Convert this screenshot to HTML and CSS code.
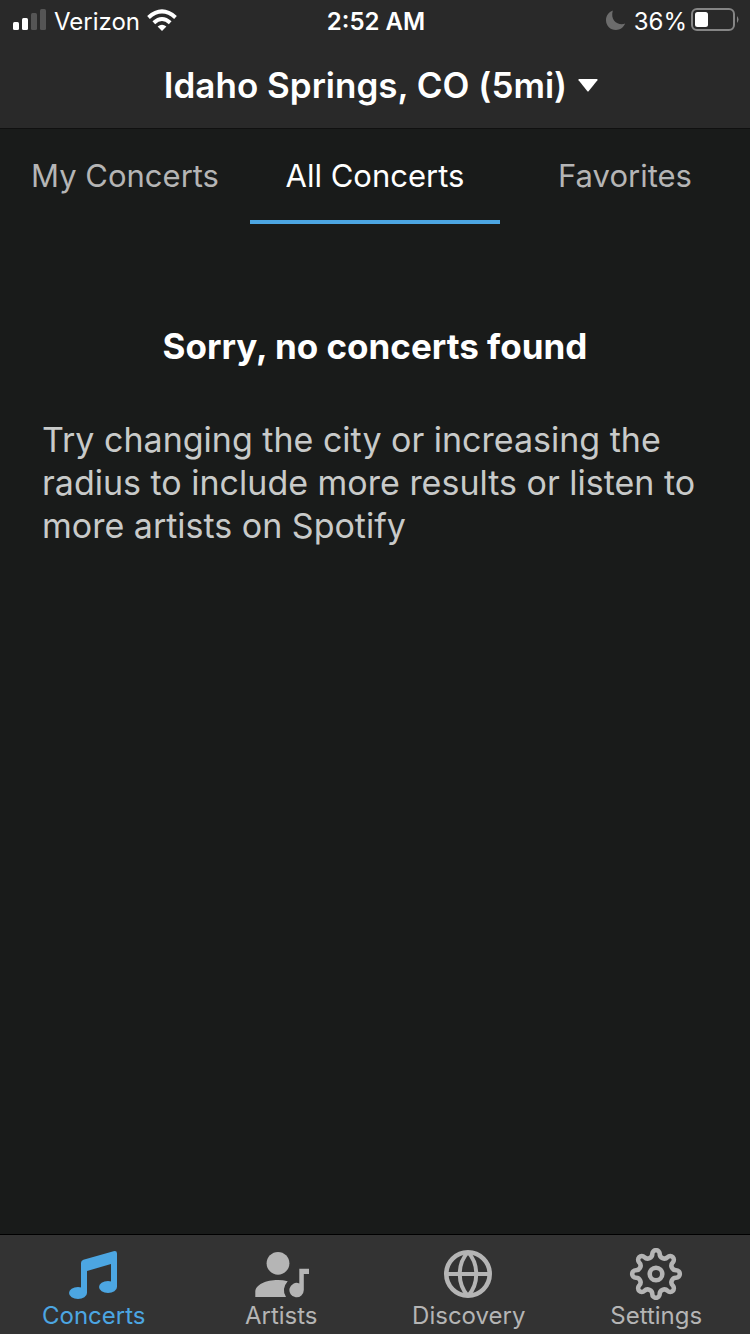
FILE: index.html
```html
<!DOCTYPE html>
<html lang="en">
<head>
<meta charset="utf-8">
<meta name="viewport" content="width=device-width, initial-scale=1">
<title>Concerts</title>
<link rel="stylesheet" href="styles.css">
</head>
<body class="app">
<header class="header">
  <div class="status">
    <div class="status-left">
      <svg class="signal" viewBox="0 0 34 24" aria-hidden="true">
        <rect x="0" y="13" width="6" height="8" rx="1.5" fill="#fff"/>
        <rect x="9" y="9" width="6" height="12" rx="1.5" fill="#fff"/>
        <rect x="18" y="4" width="6" height="17" rx="1.5" fill="#555"/>
        <rect x="27" y="0" width="6" height="21" rx="1.5" fill="#555"/>
      </svg>
      <span>Verizon</span>
      <svg class="wifi" viewBox="0 0 30 24" aria-hidden="true">
        <path d="M15 22 L10.6 17.6 Q15 13.9 19.4 17.6Z" fill="#fff"/>
        <path d="M6.8 13.7 Q15 6.3 23.2 13.7" fill="none" stroke="#fff" stroke-width="4"/>
        <path d="M1.5 8.4 Q15 -3.6 28.5 8.4" fill="none" stroke="#fff" stroke-width="4"/>
      </svg>
    </div>
    <time class="clock">2:52 AM</time>
    <div class="status-right">
      <svg class="moon" viewBox="0 0 20 22" aria-hidden="true">
        <path d="M6.8 .5 C2.8 2 0 5.8 0 10.2 C0 15.7 4.4 20 9.9 20 C14 20 17.7 17.4 19.2 13.6 C13 16 3.8 11.5 6.8 .5Z" fill="#6c6c6c"/>
      </svg>
      <span>36%</span>
      <svg class="battery" viewBox="0 0 48 26" aria-hidden="true">
        <rect x="1" y="1" width="42" height="21" rx="5" fill="none" stroke="#858585" stroke-width="2"/>
        <rect x="4" y="4" width="13" height="15" rx="2.5" fill="#fff"/>
        <path d="M46 8 Q49 11.5 46 15Z" fill="#858585"/>
      </svg>
    </div>
  </div>
  <button class="location" type="button">
    <span>Idaho Springs, CO (5mi)</span>
    <svg class="caret" viewBox="0 0 20 13" aria-hidden="true"><path d="M1 0H19Q20 .4 19.4 1.2L10.8 12Q10 13 9.2 12L.6 1.2Q0 .4 1 0Z" fill="#fff"/></svg>
  </button>
</header>
<nav class="tabs" aria-label="Concert lists">
  <button class="tab" type="button">My Concerts</button>
  <button class="tab tab-active" type="button" aria-current="true">All Concerts</button>
  <button class="tab" type="button">Favorites</button>
</nav>
<main class="content">
  <h1 class="headline">Sorry, no concerts found</h1>
  <p class="hint">Try changing the city or increasing the radius to include more results or listen to more artists on Spotify</p>
</main>
<nav class="bottom" aria-label="Main">
  <button class="item item-active" type="button" aria-current="page">
    <svg class="icon" viewBox="-3 -3 56 52" aria-hidden="true">
      <path d="M12 38V12Q12 9.5 14.4 8.8L44.5 .2Q48 -.6 48 2.5V36H42V13L18 20V42H12Z" fill="currentColor"/>
      <ellipse cx="9" cy="42" rx="9" ry="6" fill="currentColor"/>
      <ellipse cx="39" cy="36" rx="9" ry="6" fill="currentColor"/>
    </svg>
    <span>Concerts</span>
  </button>
  <button class="item" type="button">
    <svg class="icon" viewBox="-1 0 56 52" aria-hidden="true">
      <circle cx="24" cy="15.3" r="11.4" fill="currentColor"/>
      <path d="M1.3 49V44C1.3 36.5 12 32 24 32Q29 32 33.7 33.2Q27 41 32 49Z" fill="currentColor"/>
      <path d="M45.3 35.4V20.7H55V26H49.8V42A7.2 7.2 0 1 1 45.3 35.4Z" fill="currentColor"/>
    </svg>
    <span>Artists</span>
  </button>
  <button class="item" type="button">
    <svg class="icon" viewBox="-27 -26 56 52" fill="none" stroke="currentColor" stroke-width="4" aria-hidden="true">
      <circle r="21.7" stroke-width="4.6"/>
      <path d="M-22 0H22M0 -22C-11 -10 -11 10 0 22M0 -22C11 -10 11 10 0 22"/>
    </svg>
    <span>Discovery</span>
  </button>
  <button class="item" type="button">
    <svg class="icon" viewBox="-28 -26 56 52" fill="none" stroke="currentColor" stroke-width="4.6" aria-hidden="true">
      <circle r="6.3"/>
      <path d="M20.13 -3.7A3.7 3.7 0 0 1 20.13 3.7A4.6 4.6 0 0 0 16.85 11.62A3.7 3.7 0 0 1 11.62 16.85A4.6 4.6 0 0 0 3.7 20.13A3.7 3.7 0 0 1 -3.7 20.13A4.6 4.6 0 0 0 -11.62 16.85A3.7 3.7 0 0 1 -16.85 11.62A4.6 4.6 0 0 0 -20.13 3.7A3.7 3.7 0 0 1 -20.13 -3.7A4.6 4.6 0 0 0 -16.85 -11.62A3.7 3.7 0 0 1 -11.62 -16.85A4.6 4.6 0 0 0 -3.7 -20.13A3.7 3.7 0 0 1 3.7 -20.13A4.6 4.6 0 0 0 11.62 -16.85A3.7 3.7 0 0 1 16.85 -11.62A4.6 4.6 0 0 0 20.13 -3.7Z"/>
    </svg>
    <span>Settings</span>
  </button>
</nav>
</body>
</html>
```
FILE: styles.css
```css
* { box-sizing: border-box; }

.app {
  margin: 0;
  min-height: 100vh;
  display: flex;
  flex-direction: column;
  background: #191b1a;
  color: #fff;
  font-family: Inter, "Liberation Sans", sans-serif;
}

button {
  margin: 0;
  padding: 0;
  border: 0;
  background: none;
  color: inherit;
  font: inherit;
}

svg { display: block; flex: none; }

.header {
  display: flex;
  flex-direction: column;
  background: #292929;
  border-bottom: 1px solid #101010;
}

.status {
  display: grid;
  grid-template-columns: 1fr auto 1fr;
  align-items: center;
  height: 42px;
  padding: 0 11px 0 13px;
  font-size: 24px;
}

.status-left,
.status-right {
  display: flex;
  align-items: center;
  gap: 7px;
}

.status-right { justify-content: flex-end; gap: 4px; }

.signal { width: 34px; height: 24px; }
.wifi { width: 30px; height: 24px; }
.clock { font-weight: 600; }
.moon { width: 20px; height: 22px; margin-right: 4px; }
.battery { width: 48px; height: 26px; }

.location {
  display: flex;
  align-items: center;
  align-self: center;
  gap: 11px;
  height: 86px;
  padding: 0 0 0 12px;
  font-size: 35px;
  font-weight: 600;
}

.caret { width: 20px; height: 13px; }

.tabs {
  display: grid;
  grid-template-columns: repeat(3, 1fr);
}

.tab {
  height: 95px;
  padding-top: 2px;
  border-bottom: 4px solid transparent;
  color: #b5b5b5;
  font-size: 31px;
}

.tab-active {
  border-bottom-color: #4ca6e2;
  color: #fff;
}

.content {
  flex: 1;
  padding: 100px 42px 0;
}

.headline {
  margin: 0 0 50px;
  font-size: 35px;
  font-weight: 700;
  line-height: 44px;
  text-align: center;
}

.hint {
  margin: 0;
  color: #c8cac9;
  font-size: 34px;
  line-height: 43px;
}

.bottom {
  display: grid;
  grid-template-columns: repeat(4, 1fr);
  height: 100px;
  background: #333;
  border-top: 1px solid #000;
}

.item {
  display: flex;
  flex-direction: column;
  align-items: center;
  padding-top: 13px;
  color: #b5b5b5;
  font-size: 24px;
  line-height: 32px;
}

.item-active { color: #4ca6e2; }

.icon { width: 56px; height: 52px; }
```
